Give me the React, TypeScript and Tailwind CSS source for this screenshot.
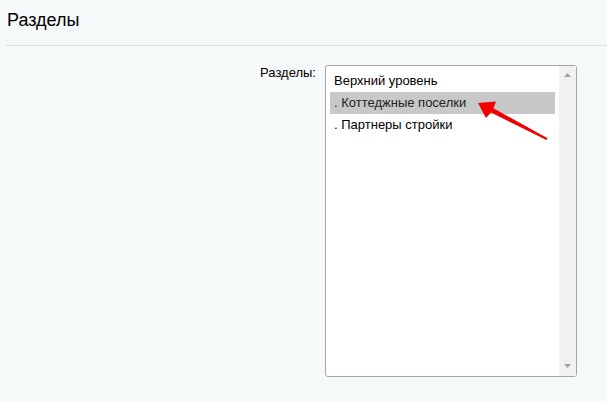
const items = [
  { id: "top", label: "Верхний уровень", selected: false },
  { id: "cottage", label: ". Коттеджные поселки", selected: true },
  { id: "partners", label: ". Партнеры стройки", selected: false },
];

function Triangle({ down }: { down?: boolean }) {
  return (
    <svg width="7" height="4" viewBox="0 0 7 4" className="block">
      {down ? (
        <polygon points="0,0 7,0 3.5,4" fill="#a3a3a3" />
      ) : (
        <polygon points="3.5,0 7,4 0,4" fill="#a3a3a3" />
      )}
    </svg>
  );
}

export default function App() {
  return (
    <div className="relative h-[401px] w-full overflow-hidden bg-[#f5f9f9] font-['Liberation_Sans',Arial,sans-serif] text-black">
      <div className="ml-[6px] border-b border-[#dcdfe1] pb-[14px] pt-[9px]">
        <h1 className="pl-[1px] text-[18px] leading-[22px] font-normal">Разделы</h1>
      </div>

      <div className="mt-[19px] flex items-start">
        <label className="w-[316px] text-right text-[13px] leading-[15px]">Разделы:</label>
        <div className="ml-[9px] flex h-[312px] w-[252px] rounded-[3px] border border-[#a5a5a5] bg-white">
          <ul className="flex-1 px-[4px] pt-[4px] text-[13px]">
            {items.map((item) => (
              <li
                key={item.id}
                className={
                  item.selected
                    ? "h-[22px] bg-[#c8c8c8] px-[4px] leading-[22px] text-[#222]"
                    : "h-[22px] px-[4px] leading-[22px]"
                }
              >
                {item.label}
              </li>
            ))}
          </ul>
          <div className="flex w-[17px] flex-col items-center justify-between bg-[#f1f1f1] pb-[8px] pt-[7px]">
            <Triangle />
            <Triangle down />
          </div>
        </div>
      </div>

      {/* red pointer arrow */}
      <svg className="pointer-events-none absolute left-0 top-0" width="607" height="401">
        <polygon
          points="478,103 496,101.5 493.4,108.2 547.6,138.2 546.4,140 491,112.6 486,118"
          fill="#f00000"
        />
      </svg>
    </div>
  );
}
